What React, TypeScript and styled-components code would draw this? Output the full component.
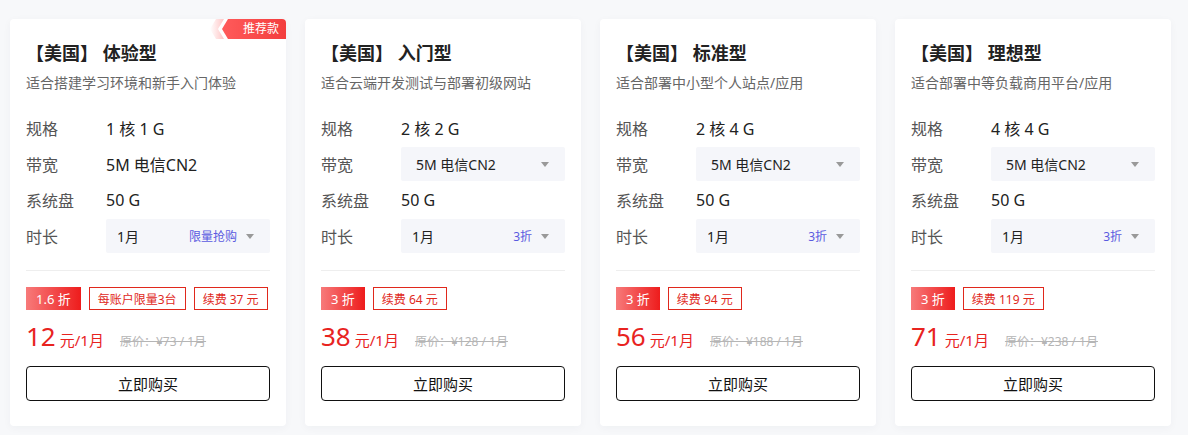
import styled, { createGlobalStyle } from "styled-components";

const GlobalStyle = createGlobalStyle`
  html, body {
    margin: 0;
    padding: 0;
    background: #f7f8fa;
  }
  body {
    font-family: "Noto Sans", "Noto Sans CJK SC", sans-serif;
    color: #222;
  }
`;

const Page = styled.div`
  display: flex;
  gap: 19px;
  padding: 19px 17px 9px 10px;
`;
const CardBox = styled.div`
  position: relative;
  width: 276px;
  box-sizing: border-box;
  padding: 21px 16px 25px;
  background: #ffffff;
  border-radius: 4px;
  box-shadow: 0 2px 8px rgba(30, 40, 80, 0.04);
`;
const Ribbon = styled.div`
  position: absolute;
  top: 0;
  right: 0;
  width: 80px;
  height: 20px;
  border-top-right-radius: 4px;
  overflow: hidden;
`;
const RibbonText = styled.span`
  position: absolute;
  right: 7px;
  top: 0;
  line-height: 20px;
  font-size: 12px;
  color: #ffffff;
`;
const Title = styled.div`
  font-size: 18px;
  line-height: 26px;
  font-weight: bold;
  color: #222;
`;
const Desc = styled.div`
  margin-top: 7px;
  font-size: 14px;
  line-height: 20px;
  color: #666;
`;
const Specs = styled.div`
  margin-top: 17px;
  display: flex;
  flex-direction: column;
`;
const Row = styled.div`
  display: flex;
  align-items: center;
  height: 36px;
`;
const Label = styled.div`
  width: 80px;
  font-size: 16px;
  color: #555;
`;
const Value = styled.div`
  font-size: 16px;
  color: #222;
`;
const Select = styled.div<{ $indent: number }>`
  flex: 1;
  height: 34px;
  display: flex;
  align-items: center;
  padding: 0 16px 0 ${(p) => p.$indent}px;
  background: #f5f6fa;
  border-radius: 2px;
  font-size: 14px;
  color: #222;
`;
const SelectText = styled.span`
  flex: 1;
`;
const Hint = styled.span`
  font-size: 12px;
  color: #5a5ae0;
  margin-right: 9px;
`;
const Caret = styled.span`
  width: 0;
  height: 0;
  border-left: 4.5px solid transparent;
  border-right: 4.5px solid transparent;
  border-top: 5px solid #999;
`;
const Divider = styled.div`
  margin-top: 16px;
  height: 1px;
  background: #eeeeee;
`;
const Tags = styled.div`
  margin-top: 16px;
  display: flex;
  gap: 8px;
`;
const Discount = styled.div`
  height: 23px;
  padding: 0 10px;
  display: flex;
  align-items: center;
  font-size: 13px;
  color: #fff;
  background: linear-gradient(90deg, #f77a7a 0%, #ee1c1c 100%);
`;
const OutlineTag = styled.div`
  height: 23px;
  box-sizing: border-box;
  padding: 0 8px;
  display: flex;
  align-items: center;
  font-size: 12px;
  color: #e0281c;
  border: 1px solid #e0281c;
`;
const PriceRow = styled.div`
  margin-top: 11px;
  height: 30px;
  display: flex;
  align-items: baseline;
`;
const Amount = styled.span`
  font-size: 26px;
  color: #e8231f;
  line-height: 30px;
`;
const Unit = styled.span`
  margin-left: 4px;
  font-size: 15px;
  color: #e8231f;
`;
const Origin = styled.span`
  margin-left: 16px;
  font-size: 12px;
  color: #b5b5b5;
  text-decoration: line-through;
`;
const BuyButton = styled.button`
  margin-top: 15px;
  width: 100%;
  height: 35px;
  background: #fff;
  border: 1px solid #111;
  border-radius: 4px;
  font-family: inherit;
  font-size: 15px;
  color: #111;
  cursor: pointer;
`;

interface IPlan {
  name: string;
  desc: string;
  spec: string;
  bwSelect: boolean;
  hint: string;
  discount: string;
  tags: string[];
  price: string;
  origin: string;
  hot?: boolean;
}

const plans: IPlan[] = [
  {
    name: "【美国】 体验型",
    desc: "适合搭建学习环境和新手入门体验",
    spec: "1 核 1 G",
    bwSelect: false,
    hint: "限量抢购",
    discount: "1.6 折",
    tags: ["每账户限量3台", "续费 37 元"],
    price: "12",
    origin: "原价：¥73 / 1月",
    hot: true,
  },
  {
    name: "【美国】 入门型",
    desc: "适合云端开发测试与部署初级网站",
    spec: "2 核 2 G",
    bwSelect: true,
    hint: "3折",
    discount: "3 折",
    tags: ["续费 64 元"],
    price: "38",
    origin: "原价：¥128 / 1月",
  },
  {
    name: "【美国】 标准型",
    desc: "适合部署中小型个人站点/应用",
    spec: "2 核 4 G",
    bwSelect: true,
    hint: "3折",
    discount: "3 折",
    tags: ["续费 94 元"],
    price: "56",
    origin: "原价：¥188 / 1月",
  },
  {
    name: "【美国】 理想型",
    desc: "适合部署中等负载商用平台/应用",
    spec: "4 核 4 G",
    bwSelect: true,
    hint: "3折",
    discount: "3 折",
    tags: ["续费 119 元"],
    price: "71",
    origin: "原价：¥238 / 1月",
  },
];

const HotRibbon = () => (
  <Ribbon>
    <svg width="80" height="20" viewBox="0 0 80 20">
      <defs>
        <linearGradient id="fade" x1="0" x2="1" y1="0" y2="0">
          <stop offset="0" stopColor="#ff5a5a" stopOpacity="0" />
          <stop offset="1" stopColor="#ff5a5a" stopOpacity="0.35" />
        </linearGradient>
        <linearGradient id="solid" x1="0" x2="1" y1="0" y2="0">
          <stop offset="0" stopColor="#ff5b5b" />
          <stop offset="1" stopColor="#f33d3d" />
        </linearGradient>
      </defs>
      <polygon points="4,10 10,0 18,0 12,10 18,20 10,20" fill="url(#fade)" />
      <polygon points="16,10 22,0 80,0 80,20 22,20" fill="url(#solid)" />
    </svg>
    <RibbonText>推荐款</RibbonText>
  </Ribbon>
);

const Card = ({ plan }: { plan: IPlan }) => (
  <CardBox>
    {plan.hot && <HotRibbon />}
    <Title>{plan.name}</Title>
    <Desc>{plan.desc}</Desc>
    <Specs>
      <Row>
        <Label>规格</Label>
        <Value>{plan.spec}</Value>
      </Row>
      <Row>
        <Label>带宽</Label>
        {plan.bwSelect ? (
          <Select $indent={15}>
            <SelectText>5M 电信CN2</SelectText>
            <Caret />
          </Select>
        ) : (
          <Value>5M 电信CN2</Value>
        )}
      </Row>
      <Row>
        <Label>系统盘</Label>
        <Value>50 G</Value>
      </Row>
      <Row>
        <Label>时长</Label>
        <Select $indent={11}>
          <SelectText>1月</SelectText>
          <Hint>{plan.hint}</Hint>
          <Caret />
        </Select>
      </Row>
    </Specs>
    <Divider />
    <Tags>
      <Discount>{plan.discount}</Discount>
      {plan.tags.map((t) => (
        <OutlineTag key={t}>{t}</OutlineTag>
      ))}
    </Tags>
    <PriceRow>
      <Amount>{plan.price}</Amount>
      <Unit>元/1月</Unit>
      <Origin>{plan.origin}</Origin>
    </PriceRow>
    <BuyButton>立即购买</BuyButton>
  </CardBox>
);

const App = () => (
  <>
    <GlobalStyle />
    <Page>
      {plans.map((p) => (
        <Card key={p.name} plan={p} />
      ))}
    </Page>
  </>
);

export default App;
